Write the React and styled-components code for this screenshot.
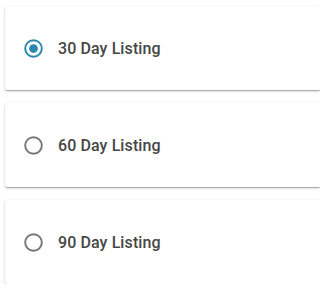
import React, { useState } from 'react';
import styled, { createGlobalStyle } from 'styled-components';

const GlobalStyle = createGlobalStyle`
  html, body {
    margin: 0;
    padding: 0;
    background: #fff;
    overflow: hidden;
  }
  body {
    font-family: Roboto, "Liberation Sans", Arial, sans-serif;
  }
`;

const List = styled.div`
  display: flex;
  flex-direction: column;
  gap: 13px;
  padding: 6px 0 0 5px;
`;

const Card = styled.label`
  display: flex;
  align-items: center;
  gap: 14px;
  height: 84px;
  padding-left: 18px;
  box-sizing: border-box;
  background: #fff;
  border-radius: 2px 0 0 2px;
  box-shadow: 0 1px 3px rgba(0, 0, 0, 0.2), 0 1px 1px rgba(0, 0, 0, 0.14),
    0 2px 1px -1px rgba(0, 0, 0, 0.12);
  cursor: pointer;
`;

const Text = styled.span`
  font-size: 16px;
  font-weight: 500;
  color: #464646;
  letter-spacing: 0.1px;
`;

const RadioIcon = ({ checked }) => (
  <svg width="21" height="21" viewBox="0 0 24 24">
    <circle
      cx="12"
      cy="12"
      r="9.5"
      fill="none"
      stroke={checked ? '#2b87b0' : '#767676'}
      strokeWidth="2.2"
    />
    {checked && <circle cx="12" cy="12" r="5" fill="#2b87b0" />}
  </svg>
);

const options = ['30 Day Listing', '60 Day Listing', '90 Day Listing'];

const App = () => {
  const [selected, setSelected] = useState(0);

  return (
    <>
      <GlobalStyle />
      <List>
        {options.map((opt, i) => (
          <Card key={opt} onClick={() => setSelected(i)}>
            <RadioIcon checked={selected === i} />
            <Text>{opt}</Text>
          </Card>
        ))}
      </List>
    </>
  );
};

export default App;
